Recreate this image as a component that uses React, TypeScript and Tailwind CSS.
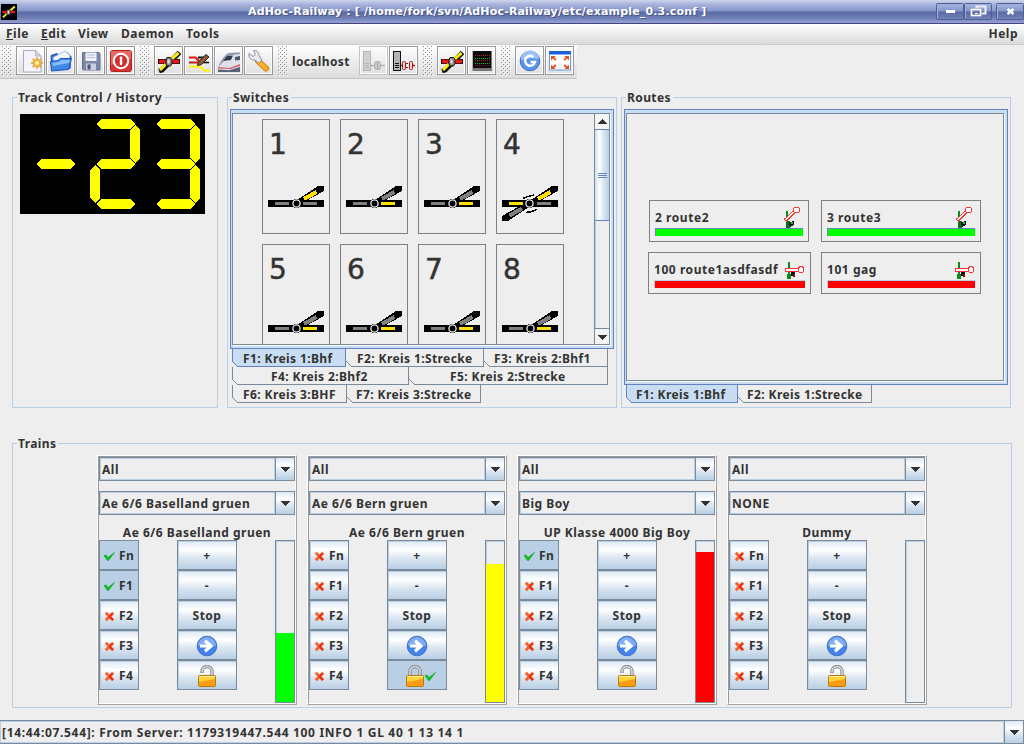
import React from "react";

const BTN = "bg-[linear-gradient(to_bottom,#dde8f3_0%,#ffffff_32%,#dbe6f1_60%,#b8cfe5_100%)]";

/* ---------- toolbar icons (drawn on a 29px grid) ---------- */
const Ico = ({ children }: { children: React.ReactNode }) => (
  <svg width="27" height="27" viewBox="1 1 27 27" className="block">{children}</svg>
);

const NewIcon = () => (
  <Ico>
    <path d="M7.500 4.500h12l5.500 5.500v16H7.500z" fill="#f4f5fa" stroke="#a9acc4" />
    <path d="M19.500 4.500v5.500h5.500z" fill="#d4d8e8" stroke="#a9acc4" strokeWidth=".8" />
    <path d="M21 11l1.400 3 3-1.200-1.200 3 3 1.200-3 1.200 1.200 3-3-1.200-1.400 3-1.400-3-3 1.200 1.200-3-3-1.200 3-1.200-1.200-3 3 1.200z" fill="#f3b63c" stroke="#dc9322" strokeWidth=".6" />
    <circle cx="21" cy="17" r="2" fill="#fff3b0" />
  </Ico>
);
const OpenIcon = () => (
  <Ico>
    <path d="M5 9.500l6-2 1 2 9-3 4 4-1 12-18 1z" fill="#2f74d8" stroke="#1a52b4" />
    <path d="M7 11.500l12-6.500 5 4-1 7-15 2z" fill="#f2f6fd" stroke="#93b2e2" strokeWidth=".7" />
    <path d="M4.500 15.500l7-1 3-2 11 0-3 11-17 1.500z" fill="#3f88e8" stroke="#1b58bd" />
    <path d="M6 17l6.500-1 3-2h8.500l-1 3-16 3z" fill="#86bcf8" />
  </Ico>
);
const SaveIcon = () => (
  <Ico>
    <path d="M6.500 6.500h16.500l1 1v16.500H7.500l-1-1z" fill="#7c87a8" stroke="#656d8b" />
    <rect x="9.500" y="6.500" width="11" height="8.500" fill="#eff1f7" />
    <path d="M11 9h8M11 11.500h8" stroke="#b9bfd0" />
    <rect x="10" y="17.500" width="10" height="6.500" fill="#c9cedd" />
    <rect x="11.500" y="18.500" width="3" height="5" fill="#4b5373" />
  </Ico>
);
const QuitIcon = () => (
  <Ico>
    <rect x="4.500" y="4.500" width="21" height="21" rx="2" fill="#d33434" stroke="#b31f1f" />
    <path d="M5 5h20v8q-10 2-20 6z" fill="#e56a64" />
    <circle cx="15" cy="15" r="7.200" fill="#cf3030" stroke="#fff" strokeWidth="2" />
    <rect x="13.800" y="10.500" width="2.400" height="8.500" rx=".8" fill="#fff" />
  </Ico>
);
const TurnoutArt = () => (
  <g>
    <path d="M4 15.500h22" stroke="#111" strokeWidth="5" />
    <path d="M5 25l3-1 15-15 2.500-2.500" stroke="#111" strokeWidth="5" fill="none" />
    <path d="M5 15.500h20" stroke="#f01414" strokeWidth="3.600" />
    <path d="M6 24l6-6M17.500 13l7-6" stroke="#f5ec14" strokeWidth="3" />
    <path d="M13 11.500h3.500l1.500 2v4l-1.500 2.500h-3.500l-1-2v-4z" fill="#888" stroke="#111" />
    <path d="M13.500 13.500h2v4h-2z" fill="#e8e8e8" />
  </g>
);
const TurnoutIcon = () => <Ico><TurnoutArt /></Ico>;
const EditRouteIcon = () => (
  <Ico>
    <path d="M5 16.500h20" stroke="#111" strokeWidth="1.600" />
    <path d="M5 11.500h6.500l5 5" stroke="#f01010" strokeWidth="2.200" fill="none" />
    <path d="M14 11.500h7" stroke="#111" strokeWidth="2" />
    <path d="M5 16.500h10" stroke="#f01010" strokeWidth="1.400" />
    <path d="M5 20.500h11l4 4h6" stroke="#fff000" strokeWidth="2.200" fill="none" />
    <path d="M13.500 19.500l1-4 7.500-7 3 2.500-7.500 7.500z" fill="#8a5a34" stroke="#3a2414" />
  </Ico>
);
const TrainIcon = () => (
  <Ico>
    <path d="M4 20Q9 9 14 7l9-1 3 1.500V25H6l-2-1z" fill="#dfe1ea" />
    <path d="M4 21Q10 9 14.500 7L26 6.500v1.500L15 9.500 9 16z" fill="#9299b0" />
    <path d="M9 15l4-5 6-.5-2 4.500z" fill="#333a52" />
    <path d="M21 11l5-1v4l-5 .5z" fill="#4a526c" />
    <path d="M4 21l11 1 11-4v2l-10 3-12-.5z" fill="#d06570" />
    <path d="M4 23.500l11 .8 11-3.300v5H4z" fill="#5c617a" />
  </Ico>
);
const WrenchIcon = () => (
  <Ico>
    <path d="M14 15l8 7.500" stroke="#d88710" strokeWidth="6" strokeLinecap="round" />
    <path d="M14 15l8 7.500" stroke="#fbb034" strokeWidth="4" strokeLinecap="round" />
    <path d="M5 7.500l4 3 2.500-2L9.500 4.500c3-.5 5.500 1.500 5.500 5l3 4.500-3.500 3-3.500-3C7.500 14.500 4 11.500 5 7.500z" fill="#e8eaf0" stroke="#878ca0" />
  </Ico>
);
const ConnectArt = ({ body, line, plug }: { body: string; line: string; plug: string }) => (
  <g>
    <rect x="4.500" y="5.500" width="7" height="19" fill={body} stroke={line} />
    <path d="M6 17.500h4M6 19.500h4M6 21.500h4" stroke={line} />
    <path d="M12 19.500h3M22 19.500h4" stroke={plug} strokeWidth="1.500" />
  </g>
);
const ConnectIcon = () => (
  <Ico>
    <ConnectArt body="#d0d0d0" line="#b4b4b4" plug="#b0b0b0" />
    <rect x="15.500" y="15.500" width="6" height="8" rx="2" fill="#c8c8c8" stroke="#b0b0b0" />
    <path d="M18.500 15v9" stroke="#aaa" />
  </Ico>
);
const DisconnectIcon = () => (
  <Ico>
    <ConnectArt body="#b4b4b4" line="#111" plug="#b01010" />
    <rect x="13.500" y="15.500" width="3" height="8" rx="1" fill="#ddd" stroke="#b01010" />
    <rect x="20.500" y="15.500" width="3" height="8" rx="1" fill="#ddd" stroke="#b01010" />
    <path d="M17 17.500h2M17 21.500h2" stroke="#b01010" />
  </Ico>
);
const BoardIcon = () => (
  <Ico>
    <rect x="5.500" y="5" width="19.500" height="20" fill="#777" />
    <rect x="6" y="5" width="18" height="17" fill="#0b0b0b" />
    <path d="M8 9.500h15M8 14.500h15" stroke="#c01818" strokeDasharray="1 1" />
    <path d="M8 12.500h15M8 17.500h15" stroke="#19b519" strokeDasharray="1 1" />
    <path d="M8 19.500h15" stroke="#801818" strokeDasharray="1 1" />
  </Ico>
);
const RefreshIcon = () => (
  <Ico>
    <circle cx="15" cy="15" r="9.800" fill="#5c93ea" stroke="#3f6fc6" />
    <path d="M6 14a9 9 0 0 1 18-1q-9-2-18 1z" fill="#9cc1f8" />
    <path d="M18.500 11a5 5 0 1 0 1.500 5h-4.500" fill="none" stroke="#fff" strokeWidth="2.400" />
  </Ico>
);
const FullscreenIcon = () => (
  <Ico>
    <rect x="4.500" y="5.500" width="21" height="18.500" fill="#fff" stroke="#5f9ae8" />
    <rect x="4" y="5" width="22" height="3.500" fill="#1a5fd8" />
    <path d="M4 8.500h22" stroke="#7db4f8" />
    <g fill="#ee4a18">
      <path d="M6 10h4.500L9.300 11.300l2.200 2.200-1.300 1.300L8 12.500 6 14.500z" />
      <path d="M24 10h-4.500l1.200 1.300-2.200 2.200 1.300 1.300L22 12.500l2 2z" />
      <path d="M6 23h4.500l-1.200-1.300 2.200-2.200-1.300-1.300L8 20.500l-2-2z" />
      <path d="M24 23h-4.500l1.200-1.300-2.200-2.200 1.300-1.300 2.200 2.300 2-2z" />
    </g>
  </Ico>
);

/* ---------- bars ---------- */
const ToolButton = ({ children, off }: { children: React.ReactNode; off?: boolean }) => (
  <div className={`h-[29px] w-[29px] shrink-0 border shadow-[inset_-1px_-1px_0_#ffffff,inset_1px_1px_0_#ffffff] ${off ? "border-[#c4c4c4]" : "border-[#999999]"}`}>{children}</div>
);
const Grip = ({ id }: { id: string }) => (
  <svg width="10" height="30" className="shrink-0" shapeRendering="crispEdges">
    <defs>
      <pattern id={id} width="4" height="4" patternUnits="userSpaceOnUse">
        <rect width="1" height="1" fill="#8c8c8c" /><rect x="2" y="2" width="1" height="1" fill="#8c8c8c" />
        <rect x="1" y="1" width="1" height="1" fill="#fff" /><rect x="3" y="3" width="1" height="1" fill="#fff" />
      </pattern>
    </defs>
    <rect width="10" height="30" fill={`url(#${id})`} />
  </svg>
);

const TitleBar = () => (
  <div className="flex h-6 shrink-0 items-center border-b border-[#45457a] bg-[linear-gradient(to_bottom,#cdd5ec_0%,#a6b2dc_20%,#8595cb_48%,#5a6aa2_52%,#6b7bb2_75%,#93a2d6_100%)]">
    <svg width="16" height="16" viewBox="3 3 25 25" className="ml-px shrink-0 bg-black"><TurnoutArt /></svg>
    <div className="w-[919px] pt-px pl-[231px] font-['DejaVu_Sans'] text-[11px] font-bold tracking-[0.17px] whitespace-pre text-white [text-shadow:1px_1px_0_#4a5688]">AdHoc-Railway : [ /home/fork/svn/AdHoc-Railway/etc/example_0.3.conf ]</div>
    <svg width="88" height="17" viewBox="0 0 88 17" className="shrink-0" fill="none">
      <g stroke="#4f5e94"><rect x=".5" y=".5" width="27" height="16" rx="1" /><rect x="28.500" y=".5" width="27" height="16" rx="1" /><rect x="60.500" y=".5" width="27" height="16" rx="1" /></g>
      <g stroke="#a3afd8"><path d="M1.500 15V1.500h25M29.500 15V1.500h25M61.500 15V1.500h25" /></g>
      <rect x="10" y="7" width="9" height="3" fill="#fff" />
      <path d="M40.500 5V3.500h9v7h-4" stroke="#f0f0f4" strokeWidth="2" />
      <rect x="35.500" y="6.500" width="9" height="6" stroke="#fff" strokeWidth="1.600" />
      <path d="M39 10.500h3" stroke="#fff" />
      <path d="M71.500 6l6 5M77.500 6l-6 5" stroke="#fff" strokeWidth="2.400" />
    </svg>
  </div>
);

const MenuBar = () => (
  <div className="flex h-[21px] shrink-0 items-center border-b border-[#cccccc] bg-gradient-to-b from-white to-[#dadada] pl-1.5 tracking-[0.5px]">
    <span className="w-[35px]"><u>F</u>ile</span>
    <span className="w-[37px]"><u>E</u>dit</span>
    <span className="w-[43px]">View</span>
    <span className="w-[65px]">Daemon</span>
    <span className="grow tracking-[0.6px]">Tools</span>
    <span className="pr-[6px]">Help</span>
  </div>
);

const ToolBar = () => (
  <div className="flex h-[34px] w-[577px] shrink-0 items-start border-b border-[#c4c4c4] bg-gradient-to-b from-white to-[#dcdcdc] pt-px pl-[2px]">
    <Grip id="g1" />
    <div className="ml-1 flex gap-px"><ToolButton><NewIcon /></ToolButton><ToolButton><OpenIcon /></ToolButton><ToolButton><SaveIcon /></ToolButton><ToolButton><QuitIcon /></ToolButton></div>
    <div className="ml-[5px]"><Grip id="g2" /></div>
    <div className="ml-1 flex gap-px"><ToolButton><TurnoutIcon /></ToolButton><ToolButton><EditRouteIcon /></ToolButton><ToolButton><TrainIcon /></ToolButton><ToolButton><WrenchIcon /></ToolButton></div>
    <div className="ml-[5px]"><Grip id="g3" /></div>
    <div className="flex h-[32px] w-[71px] items-center pl-1 tracking-[0.35px]">localhost</div>
    <div className="flex gap-px"><ToolButton off><ConnectIcon /></ToolButton><ToolButton><DisconnectIcon /></ToolButton></div>
    <div className="ml-[5px]"><Grip id="g4" /></div>
    <div className="ml-1 flex gap-px"><ToolButton><TurnoutIcon /></ToolButton><ToolButton><BoardIcon /></ToolButton></div>
    <div className="ml-[5px]"><Grip id="g5" /></div>
    <div className="ml-1 flex gap-px"><ToolButton><RefreshIcon /></ToolButton><ToolButton><FullscreenIcon /></ToolButton></div>
  </div>
);

/* ---------- panels ---------- */
const Panel = ({ title, className, children }: { title: string; className: string; children: React.ReactNode }) => (
  <section className={`flex shrink-0 flex-col border border-[#b8cfe5] ${className}`}>
    <div className="-mt-[9px] ml-1 h-4 self-start bg-[#eeeeee] pr-0.5 pl-px leading-[18px] tracking-[0.4px]">{title}</div>
    {children}
  </section>
);

const TrackDisplay = () => (
  <svg width="185" height="100" className="mt-[9px] ml-[7px] block bg-black" fill="#ff0" shapeRendering="crispEdges">
    <path d="M16 50l5-5h29l5 5-5 5H21z" />
    <path d="M76 10l5-5h29l5 5-5 5H81zM115 11l5 5v28l-5 5-5-5V16zM76 50l5-5h29l5 5-5 5H81zM75 51l5 5v28l-5 5-5-5V56zM76 90l5-5h29l5 5-5 5H81z" />
    <path d="M136 10l5-5h29l5 5-5 5h-29zM175 11l5 5v28l-5 5-5-5V16zM136 50l5-5h29l5 5-5 5h-29zM175 51l5 5v28l-5 5-5-5V56zM136 90l5-5h29l5 5-5 5h-29z" />
  </svg>
);

const SwitchIcon = ({ kind }: { kind: "curved" | "straight" | "cross" }) => {
  const diag = kind === "straight" ? "#808080" : "#ffe000";
  const right = kind === "straight" ? "#ffe000" : "#808080";
  const left = kind === "cross" ? "#ffe000" : "#808080";
  const cx = kind === "cross" ? 27.5 : 28.5;
  return (
    <svg width="56" height="36" viewBox="0 0 56 36" shapeRendering="crispEdges" className="mt-[22px] ml-[5px] block shrink-0">
      <path d="M0 14h56v7H0z" />
      <path d="M29 14L50 0h6v5L38 15z" />
      {kind === "cross" && <path d="M27 21L6 35H0v-5l18-10z" />}
      <path d="M7 16h14v3H7z" fill={left} />
      <path d="M35 16h14v3H35z" fill={right} />
      <path d="M36 13L48.500 6" stroke={diag} strokeWidth="4" />
      {kind === "cross" && <path d="M7.500 29.500L20 22.500" stroke="#808080" strokeWidth="4" />}
      <circle cx={cx} cy="17.500" r="4.800" />
      <circle cx={cx} cy="17.500" r="3.600" stroke="#eee" strokeWidth="1.300" shapeRendering="auto" />
      {kind === "cross" && <path d="M21 12.500l5-2 6-1.500M24 26.500l6-1 5-2" stroke="#000" fill="none" strokeWidth="1.500" />}
    </svg>
  );
};

const SwitchCell = ({ n }: { n: number }) => (
  <div className="flex h-[115px] w-[68px] flex-col border border-[#808080]">
    <div className="mt-[7px] h-[37px] pl-[6px] font-['DejaVu_Sans'] text-[28px] leading-[36px] font-normal tracking-normal [-webkit-text-stroke:0.5px_#333333]">{n}</div>
    <SwitchIcon kind={n === 1 ? "curved" : n === 4 ? "cross" : "straight"} />
  </div>
);

const Arrow = ({ up }: { up?: boolean }) => (
  <svg width="9" height="5" viewBox="0 0 9 5" shapeRendering="crispEdges"><path d={up ? "M0 5h9L4.500 0z" : "M0 0h9L4.500 5z"} fill="#333" /></svg>
);

const Tab = ({ label, w, pl, active, first }: { label: string; w: string; pl: string; active?: boolean; first?: boolean }) => (
  <div className={`relative h-[18px] shrink-0 border-r border-b leading-[19px] tracking-[0.4px] whitespace-pre ${w} ${pl} ${active ? "border-[#6382bf] bg-[#c8ddf2]" : "border-[#7a8a99] bg-[#eeeeee]"} ${first ? "border-l" : ""}`}>
    {label}
    <svg width="6" height="6" className={`absolute -bottom-px ${first ? "-left-px" : "left-0"}`} shapeRendering="crispEdges">
      <path d="M0 0v6h6z" fill="#eee" /><path d="M0 0l6 6" stroke={active ? "#6382bf" : "#7a8a99"} />
    </svg>
  </div>
);

const Pane = ({ className, children }: { className: string; children: React.ReactNode }) => (
  <div className={`shrink-0 border border-[#6382bf] bg-[#c8ddf2] pt-[3px] pr-[3px] pb-[3px] pl-px ${className}`}>
    <div className="flex h-full border border-[#7a8a99] shadow-[1px_1px_0_#ffffff]">{children}</div>
  </div>
);

const Switches = () => (
  <Panel title="Switches" className="ml-[9px] h-[311px] w-[390px]">
    <Pane className="mt-1 ml-[2px] h-[240px] w-[384px]">
      <div className="h-full w-[361px] shrink-0 overflow-hidden bg-[#eeeeee] pt-[5px] pl-[29px]">
        <div className="grid grid-cols-[repeat(4,68px)] gap-2.5">{[1, 2, 3, 4, 5, 6, 7, 8].map((n) => <SwitchCell key={n} n={n} />)}</div>
      </div>
      <div className="flex grow flex-col border-l border-[#7a8a99] bg-[#eeeeee]">
        <div className="flex h-[15px] items-center justify-center bg-[#f4f4f4]"><Arrow up /></div>
        <div className="flex h-[92px] flex-col items-center justify-center gap-px border-y border-[#6382bf] bg-[linear-gradient(to_right,#c8ddf2_0%,#ffffff_30%,#dbe6f1_60%,#b8cfe5_100%)]">
          <i className="h-px w-[9px] bg-[#6382bf]" /><i className="h-px w-[9px] bg-[#6382bf]" /><i className="h-px w-[9px] bg-[#6382bf]" />
        </div>
        <div className="grow border-l border-[#b8cfe5]" />
        <div className="flex h-[16px] items-center justify-center border-t border-[#7a8a99] bg-[#f4f4f4] pt-px"><Arrow /></div>
      </div>
    </Pane>
    <div className="ml-1 flex"><Tab label="F1: Kreis 1:Bhf" w="w-[114px]" pl="pl-[10px]" active first /><Tab label="F2: Kreis 1:Strecke" w="w-[138px]" pl="pl-[11px]" /><Tab label="F3: Kreis 2:Bhf1" w="w-[124px]" pl="pl-[10px]" /></div>
    <div className="ml-1 flex"><Tab label="F4: Kreis 2:Bhf2" w="w-[177px]" pl="pl-[38px]" first /><Tab label="F5: Kreis 2:Strecke" w="w-[199px]" pl="pl-[41px]" /></div>
    <div className="ml-1 flex"><Tab label="F6: Kreis 3:BHF" w="w-[115px]" pl="pl-[10px]" first /><Tab label="F7: Kreis 3:Strecke" w="w-[134px]" pl="pl-[9px]" /></div>
  </Panel>
);

const SignalUp = () => (
  <svg width="18" height="22" viewBox="0 0 18 22" shapeRendering="crispEdges" className="shrink-0">
    <path d="M3 5h2v17H3z" fill="#0a8a1a" /><path d="M3 15h4v7H3z" fill="#08701a" />
    <path d="M6 16l5-1v4l-4 2z" fill="#111" /><rect x="8" y="16" width="2" height="2" fill="#1bbf2a" />
    <path d="M2 14.500L11.500 5.500" stroke="#f33" strokeWidth="3.600" /><path d="M2.500 14L12 5" stroke="#fff" strokeWidth="1.500" />
    <circle cx="13.500" cy="4" r="3" fill="#fff" stroke="#f33" />
  </svg>
);
const SignalFlat = () => (
  <svg width="20" height="19" viewBox="0 0 20 19" shapeRendering="crispEdges" className="shrink-0">
    <path d="M3 1h2v17H3zM2 13h4v5H2z" fill="#0a8a1a" />
    <path d="M6 11h4v4H6z" fill="#111" /><rect x="8" y="13" width="2" height="3" fill="#8a1010" />
    <rect x=".5" y="7.500" width="13" height="3" fill="#fff" stroke="#f33" />
    <circle cx="16" cy="8.700" r="3" fill="#fff" stroke="#f33" />
  </svg>
);
const Route = ({ label, up, className }: { label: string; up?: boolean; className: string }) => (
  <div className={`flex h-[42px] flex-col border border-[#808080] px-[5px] ${className}`}>
    <div className="flex h-[27px] items-end justify-between">
      <span className="h-[19px] leading-[17px] tracking-[0.55px]">{label}</span>
      {up ? <div className="pr-[2px]"><SignalUp /></div> : <SignalFlat />}
    </div>
    <div className={`h-2 border-t border-l ${up ? "border-[#6382bf] bg-[#00ff00]" : "border-[#b8cfe5] bg-[#ff0000]"}`} />
  </div>
);

const Routes = () => (
  <Panel title="Routes" className="ml-1 h-[311px] w-[390px]">
    <Pane className="mt-1 ml-[2px] h-[276px] w-[384px]">
      <div className="flex grow flex-col gap-2.5 bg-[#eeeeee] pt-[86px] pl-[21px]">
        <div className="flex pl-px"><Route label="2 route2" up className="w-[160px]" /><Route label="3 route3" up className="ml-3 w-[160px]" /></div>
        <div className="flex"><Route label="100 route1asdfasdf" className="w-[163px]" /><Route label="101 gag" className="ml-2.5 w-[160px]" /></div>
      </div>
    </Pane>
    <div className="ml-1 flex"><Tab label="F1: Kreis 1:Bhf" w="w-[112px]" pl="pl-[9px]" active first /><Tab label="F2: Kreis 1:Strecke" w="w-[134px]" pl="pl-[9px]" /></div>
  </Panel>
);

/* ---------- trains ---------- */
const Combo = ({ value, className = "" }: { value: string; className?: string }) => (
  <div className={`flex h-6 shrink-0 border border-[#7a8a99] ${className}`}>
    <div className="grow border border-[#b8cfe5] pl-px leading-[21px] whitespace-pre">{value}</div>
    <div className={`flex w-[19px] items-center justify-center border-l border-[#7a8a99] ${BTN}`}><Arrow /></div>
  </div>
);
const Check = () => (
  <svg width="11" height="9" viewBox="0 0 11 9"><path d="M0 3.500l2-.5 2 2.500L10.500.5 4.500 8.500h-1z" fill="#0cc41c" stroke="#0a9c18" strokeWidth=".6" /></svg>
);
const Cross = () => (
  <svg width="11" height="11" viewBox="0 0 11 11"><path d="M1.800 1.800l7.400 7.400M9.200 1.800L1.800 9.200" stroke="#f4642e" strokeWidth="3" /><path d="M5 5l4 4M5.500 5.500l3-3" stroke="#e5260c" strokeWidth="1.600" /></svg>
);
const Forward = () => (
  <svg width="22" height="22" viewBox="0 0 22 22">
    <circle cx="11" cy="11" r="9.800" fill="#4482ec" stroke="#4470c4" />
    <path d="M2 11a9 9 0 0 1 18 0q-9-3-18 0z" fill="#80aef6" />
    <path d="M4 9.500h6.500L8 7l2-2.500 7.500 6.500-7.500 6.500L8 15l2.500-2.500H4z" fill="#fff" />
  </svg>
);
const Lock = ({ open }: { open?: boolean }) => (
  <svg width="20" height="22" viewBox="0 0 20 22" className="shrink-0">
    <path d={open ? "M5 8V6.500a5 5 0 0 1 10 0V11" : "M5 11V6.500a5 5 0 0 1 10 0V11"} fill="none" stroke="#85858c" strokeWidth="3.400" />
    <path d={open ? "M5 7.500V6.500a5 5 0 0 1 10 0V11" : "M5 11V6.500a5 5 0 0 1 10 0V11"} fill="none" stroke="#dcdce2" strokeWidth="1.500" />
    <rect x="1.500" y="10.500" width="17" height="11" rx="1" fill="#ffd23a" stroke="#b8780c" />
    <path d="M2 17l16-3v7H2z" fill="#f99d16" />
    <path d="M2.500 11.500h15" stroke="#fff3a0" />
  </svg>
);
const Ctl = ({ on, children, className = "" }: { on?: boolean; children: React.ReactNode; className?: string }) => (
  <div className={`flex h-[30px] items-center border border-[#7a8a99] pt-0.5 shadow-[inset_1px_1px_0_#b8cfe5] ${on ? "bg-[#b8cfe5]" : BTN} ${className}`}>{children}</div>
);

type Train = { value: string; name: string; on: number; level: string; locked?: boolean };
const TRAINS: Train[] = [
  { value: "Ae 6/6 Baselland gruen", name: "Ae 6/6 Baselland gruen", on: 2, level: "h-[69px] bg-[#00ff00]" },
  { value: "Ae 6/6 Bern gruen", name: "Ae 6/6 Bern gruen", on: 0, level: "h-[138px] bg-[#ffff00]", locked: true },
  { value: "Big Boy", name: "UP Klasse 4000 Big Boy", on: 1, level: "h-[150px] bg-[#ff0000]" },
  { value: "NONE", name: "Dummy", on: 0, level: "h-0" },
];

const TrainPanel = ({ t }: { t: Train }) => (
  <div className="h-[250px] w-[200px] border border-t-white border-r-[#a3a3a3] border-b-[#a3a3a3] border-l-white">
    <div className="flex h-full flex-col border border-t-[#999999] border-r-white border-b-white border-l-[#999999]">
      <Combo value="All" />
      <Combo value={t.value} className="mt-2.5" />
      <div className="mt-[10px] h-[15px] text-center leading-4 tracking-[0.5px]">{t.name}</div>
      <div className="flex justify-between">
        <div className="w-10">
          {["Fn", "F1", "F2", "F3", "F4"].map((f, i) => (
            <Ctl key={f} on={i < t.on} className="pl-1">{i < t.on ? <Check /> : <Cross />}<span className="pl-[4px]">{f}</span></Ctl>
          ))}
        </div>
        <div className="w-[60px]">
          <Ctl className="justify-center">+</Ctl>
          <Ctl className="justify-center">-</Ctl>
          <Ctl className="justify-center">Stop</Ctl>
          <Ctl className="justify-center"><Forward /></Ctl>
          <Ctl className={t.locked ? "pl-[17px]" : "justify-center"} on={t.locked}>{t.locked ? <><Lock /><Check /></> : <Lock open />}</Ctl>
        </div>
        <div className="flex h-[163px] w-5 flex-col justify-end border border-[#7a8a99] shadow-[inset_1px_1px_0_#b8cfe5]">
          <div className={t.level} />
        </div>
      </div>
    </div>
  </div>
);

export default function App() {
  return (
    <div className="flex h-[744px] w-[1024px] flex-col overflow-hidden bg-[#eeeeee] font-['Noto_Sans',sans-serif] text-[12px] font-bold tracking-[0.5px] text-[#333333]">
      <TitleBar />
      <MenuBar />
      <ToolBar />
      <div className="mt-[18px] flex pl-3">
        <Panel title="Track Control / History" className="h-[311px] w-[206px]"><TrackDisplay /></Panel>
        <Switches />
        <Routes />
      </div>
      <Panel title="Trains" className="mt-[35px] ml-3 h-[265px] w-[1000px]">
        <div className="mt-1 flex gap-2.5 pl-[84px]">{TRAINS.map((t) => <TrainPanel key={t.name} t={t} />)}</div>
      </Panel>
      <Combo value="[14:44:07.544]: From Server: 1179319447.544 100 INFO 1 GL 40 1 13 14 1" className="mt-3 -ml-px tracking-[0.68px]" />
    </div>
  );
}
